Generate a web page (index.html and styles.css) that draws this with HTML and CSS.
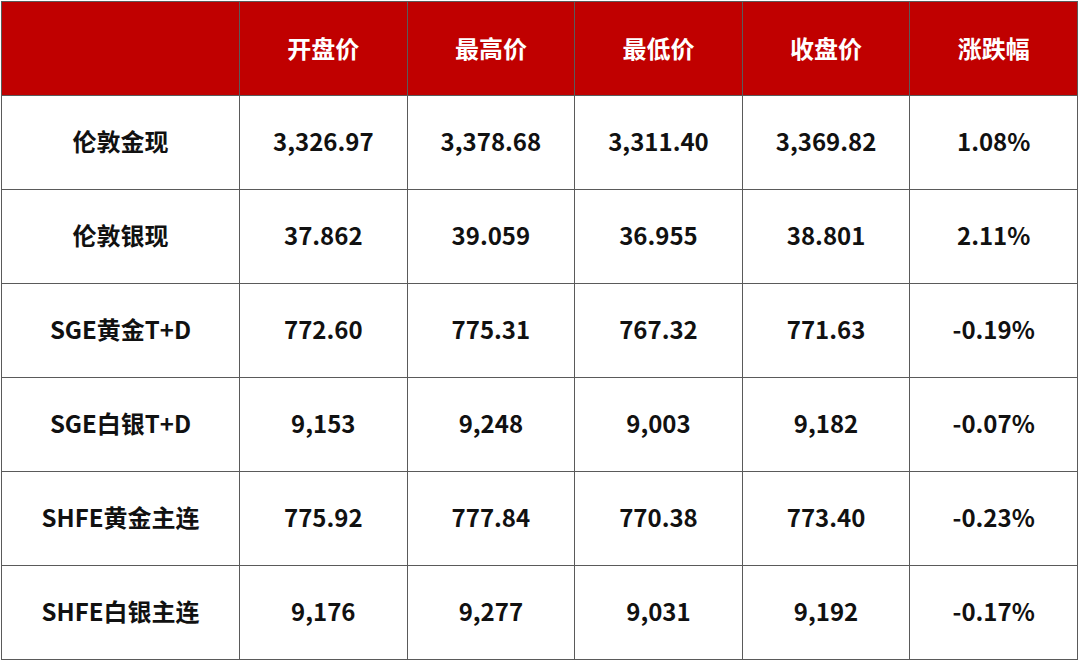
FILE: index.html
```html
<!DOCTYPE html>
<html lang="zh">
<head>
<meta charset="utf-8">
<link rel="stylesheet" href="styles.css">
</head>
<body>
<table class="quote">
  <colgroup>
    <col class="c-name"><col class="c-num"><col class="c-num"><col class="c-num"><col class="c-num"><col class="c-num">
  </colgroup>
  <thead>
    <tr><th></th><th>开盘价</th><th>最高价</th><th>最低价</th><th>收盘价</th><th>涨跌幅</th></tr>
  </thead>
  <tbody>
    <tr><td>伦敦金现</td><td>3,326.97</td><td>3,378.68</td><td>3,311.40</td><td>3,369.82</td><td>1.08%</td></tr>
    <tr><td>伦敦银现</td><td>37.862</td><td>39.059</td><td>36.955</td><td>38.801</td><td>2.11%</td></tr>
    <tr><td>SGE黄金T+D</td><td>772.60</td><td>775.31</td><td>767.32</td><td>771.63</td><td>-0.19%</td></tr>
    <tr><td>SGE白银T+D</td><td>9,153</td><td>9,248</td><td>9,003</td><td>9,182</td><td>-0.07%</td></tr>
    <tr><td>SHFE黄金主连</td><td>775.92</td><td>777.84</td><td>770.38</td><td>773.40</td><td>-0.23%</td></tr>
    <tr><td>SHFE白银主连</td><td>9,176</td><td>9,277</td><td>9,031</td><td>9,192</td><td>-0.17%</td></tr>
  </tbody>
</table>
</body>
</html>
```
FILE: styles.css
```css
html, body {
  margin: 0;
  padding: 0;
  background: #ffffff;
}
body {
  padding: 1px 0 0 1px;
  font-family: "Noto Sans CJK SC", "Noto Sans", sans-serif;
}
.quote {
  border-collapse: collapse;
  table-layout: fixed;
  width: 1076px;
}
.c-name { width: 238px; }
.c-num { width: 167.6px; }
.quote th, .quote td {
  border: 1px solid #5a5a5a;
  text-align: center;
  vertical-align: middle;
  font-weight: 700;
  font-size: 24px;
  line-height: 1.2;
}
.quote th {
  background: #c00000;
  color: #ffffff;
  height: 93px;
  padding: 0;
}
.quote td {
  color: #111111;
  height: 90px;
  padding: 0 0 3px;
}
```
